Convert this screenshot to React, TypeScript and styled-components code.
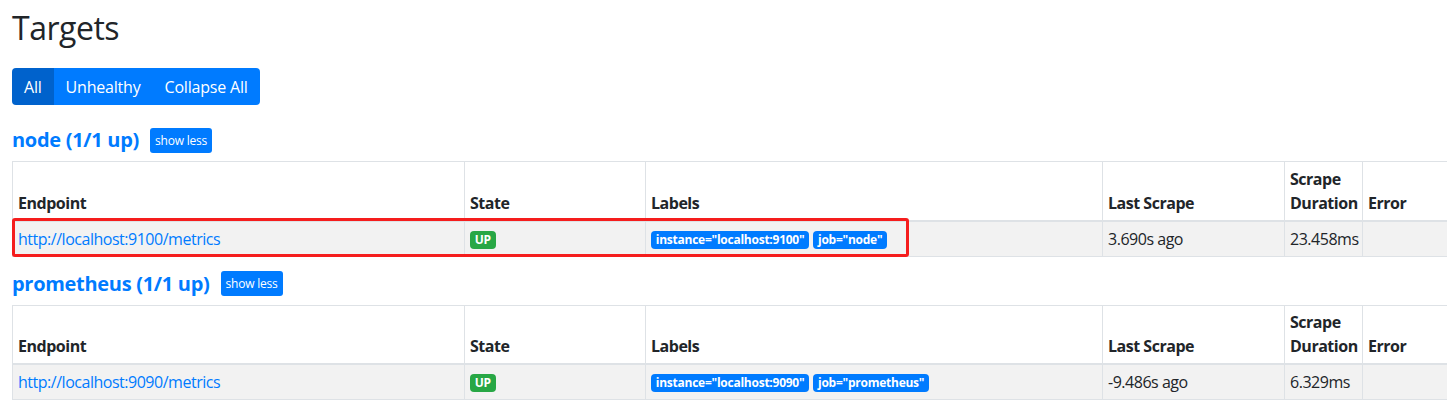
import React from "react";
import styled, { createGlobalStyle } from "styled-components";

const Global = createGlobalStyle`
  html, body { margin: 0; padding: 0; overflow: hidden; background: #fff; }
  body {
    font-family: "Open Sans", "Liberation Sans", sans-serif;
    font-size: 16px;
    line-height: 1.5;
    letter-spacing: -0.03em;
    color: #212529;
  }
`;

const Page = styled.div`
  padding: 0 12px;
  width: 1560px;
`;

const Title = styled.h2`
  margin: 9px 0 0;
  font-size: 32px;
  font-weight: 500;
  line-height: 1.2;
`;

const BtnGroup = styled.div`
  display: inline-flex;
  margin-top: 21px;
  border-radius: 4px;
  overflow: hidden;
`;

const GroupBtn = styled.button<{ $active?: boolean }>`
  font-family: inherit;
  font-size: 16px;
  letter-spacing: -0.2px;
  line-height: 1.5;
  height: 37px;
  padding: 6px 12px;
  border: none;
  color: #fff;
  background: ${(p) => (p.$active ? "#0062cc" : "#007bff")};
  cursor: pointer;
`;

const Section = styled.section``;

const PoolHeader = styled.div<{ $first?: boolean }>`
  display: flex;
  align-items: center;
  height: 30px;
  margin-top: ${(p) => (p.$first ? "20px" : "12px")};
  margin-bottom: 6px;
`;

const PoolLink = styled.a`
  font-size: 20px;
  font-weight: 700;
  letter-spacing: -0.3px;
  color: #007bff;
  text-decoration: none;
`;

const SmallBtn = styled.button`
  margin-left: 11px;
  height: 25px;
  padding: 0 5px;
  font-family: inherit;
  font-size: 12px;
  letter-spacing: -0.2px;
  color: #fff;
  background: #007bff;
  border: none;
  border-radius: 3px;
`;

const TableWrap = styled.div`
  position: relative;
`;

const Table = styled.table`
  border-collapse: collapse;
  table-layout: fixed;
  width: 1500px;
`;

const Th = styled.th`
  text-align: left;
  vertical-align: bottom;
  font-weight: 700;
  padding: 4.8px 5px;
  border: 1px solid #dee2e6;
  border-bottom: 2px solid #dee2e6;
`;

const Td = styled.td`
  vertical-align: top;
  padding: 4.8px 5px;
  border: 1px solid #dee2e6;
  background: #f2f2f2;
`;

const EndpointLink = styled.a`
  color: #007bff;
  text-decoration: none;
`;

const Badge = styled.span<{ $color: string }>`
  display: inline-block;
  padding: 3px 4.8px;
  font-size: 12px;
  font-weight: 700;
  letter-spacing: -0.25px;
  line-height: 1;
  color: #fff;
  background: ${(p) => p.$color};
  border-radius: 4px;
  margin-right: 4px;
  vertical-align: 1px;
`;

const Highlight = styled.div`
  position: absolute;
  left: 0;
  top: 57px;
  width: 897px;
  height: 39px;
  box-sizing: border-box;
  border: 3px solid #f51d1d;
  border-radius: 3px;
  pointer-events: none;
`;

type Pool = {
  name: string;
  endpoint: string;
  labels: string[];
  last: string;
  duration: string;
  highlight?: boolean;
};

const pools: Pool[] = [
  {
    name: "node",
    endpoint: "http://localhost:9100/metrics",
    labels: ['instance="localhost:9100"', 'job="node"'],
    last: "3.690s ago",
    duration: "23.458ms",
    highlight: true,
  },
  {
    name: "prometheus",
    endpoint: "http://localhost:9090/metrics",
    labels: ['instance="localhost:9090"', 'job="prometheus"'],
    last: "-9.486s ago",
    duration: "6.329ms",
  },
];

const widths = [452, 181, 457, 182, 78, 150];

export default function App() {
  return (
    <>
      <Global />
      <Page>
        <Title>Targets</Title>
        <BtnGroup>
          <GroupBtn $active>All</GroupBtn>
          <GroupBtn>Unhealthy</GroupBtn>
          <GroupBtn>Collapse All</GroupBtn>
        </BtnGroup>
        {pools.map((p, i) => (
          <Section key={p.name}>
            <PoolHeader $first={i === 0}>
              <PoolLink href="#">{p.name} (1/1 up)</PoolLink>
              <SmallBtn>show less</SmallBtn>
            </PoolHeader>
            <TableWrap>
              <Table>
                <colgroup>
                  {widths.map((w, j) => (
                    <col key={j} style={{ width: w }} />
                  ))}
                </colgroup>
                <thead>
                  <tr>
                    <Th>Endpoint</Th>
                    <Th>State</Th>
                    <Th>Labels</Th>
                    <Th>Last Scrape</Th>
                    <Th>Scrape Duration</Th>
                    <Th>Error</Th>
                  </tr>
                </thead>
                <tbody>
                  <tr>
                    <Td>
                      <EndpointLink href="#">{p.endpoint}</EndpointLink>
                    </Td>
                    <Td>
                      <Badge $color="#28a745">UP</Badge>
                    </Td>
                    <Td>
                      {p.labels.map((l) => (
                        <Badge key={l} $color="#007bff">
                          {l}
                        </Badge>
                      ))}
                    </Td>
                    <Td>{p.last}</Td>
                    <Td>{p.duration}</Td>
                    <Td></Td>
                  </tr>
                </tbody>
              </Table>
              {p.highlight && <Highlight />}
            </TableWrap>
          </Section>
        ))}
      </Page>
    </>
  );
}
